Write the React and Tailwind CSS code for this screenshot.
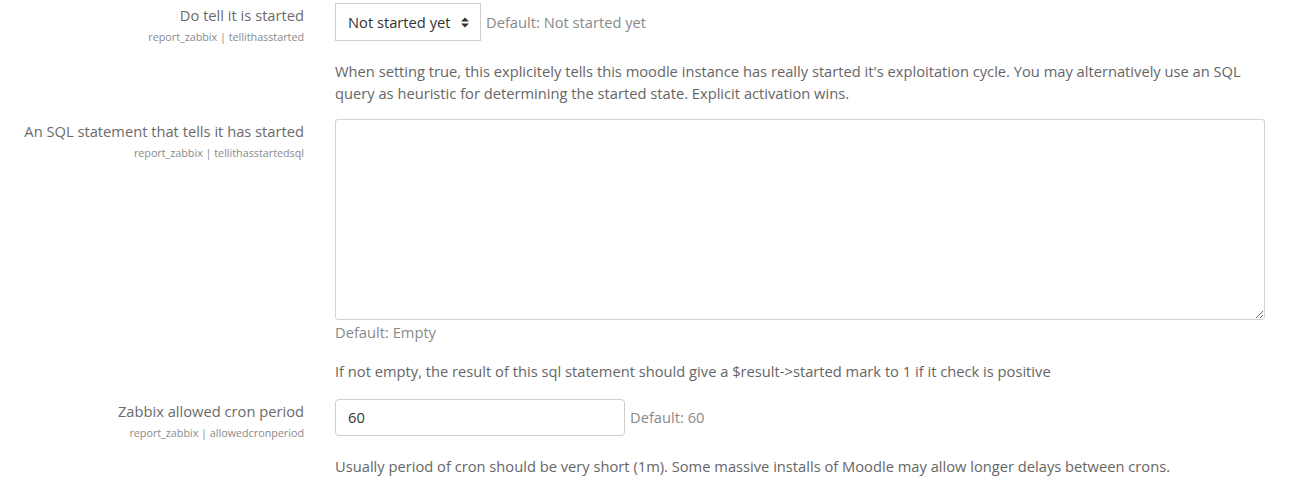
import React from "react";

// Label column on the left, control + description on the right
function Setting({ label, shortname, children }) {
    return (
        <div className="flex">
            <div className="w-[304px] shrink-0 text-right pt-px">
                <div className="text-[14.7px] leading-[22px] text-[#6b6b6b]">
                    {label}
                </div>
                <div className="mt-[3px] text-[10.75px] leading-[16px] text-[#8a8a8a]">
                    {shortname}
                </div>
            </div>
            <div className="ml-[31px] flex-1 pr-[28px]">{children}</div>
        </div>
    );
}

function UpDown() {
    return (
        <svg width="8" height="11" viewBox="0 0 8 11" className="text-[#333]">
            <path d="M0 4.5 L4 0.5 L8 4.5 Z" fill="currentColor" />
            <path d="M0 6.5 L4 10.5 L8 6.5 Z" fill="currentColor" />
        </svg>
    );
}

export default function App() {
    return (
        <div
            className="bg-white w-[1293px] h-[483px] overflow-hidden pt-[3px] text-[14.7px] text-[#666]"
            style={{ fontFamily: '"Open Sans", "Noto Sans", sans-serif' }}
        >
            <Setting label="Do tell it is started" shortname="report_zabbix | tellithasstarted">
                <div className="flex items-center">
                    <div className="h-[38px] w-[146px] border border-[#cfcfcf] flex items-center justify-between pl-[12px] pr-[11px] text-[#333]">
                        <span>Not started yet</span>
                        <UpDown />
                    </div>
                    <span className="ml-[5px] text-[#8a8a8a]">Default: Not started yet</span>
                </div>
                <p className="mt-[19px] leading-[22px]">
                    When setting true, this explicitely tells this moodle instance has really started it's exploitation cycle. You may alternatively use an SQL query as heuristic for determining the started state. Explicit activation wins.
                </p>
            </Setting>

            <div className="mt-[15px]">
                <Setting label="An SQL statement that tells it has started" shortname="report_zabbix | tellithasstartedsql">
                    <textarea
                        className="block w-full h-[201px] border border-[#d4d4d4] rounded-[3px] outline-none"
                        readOnly
                    />
                    <div className="mt-px leading-[22px] text-[#8a8a8a]">Default: Empty</div>
                    <p className="mt-[17px] leading-[22px]">
                        If not empty, the result of this sql statement should give a $result-&gt;started mark to 1 if it check is positive
                    </p>
                </Setting>
            </div>

            <div className="mt-[17px]">
                <Setting label="Zabbix allowed cron period" shortname="report_zabbix | allowedcronperiod">
                    <div className="flex items-center">
                        <div className="h-[37px] w-[290px] border border-[#cfcfcf] rounded-[4px] flex items-center pl-[12px] text-[#333]">
                            60
                        </div>
                        <span className="ml-[5px] text-[#8a8a8a]">Default: 60</span>
                    </div>
                    <p className="mt-[19px] leading-[22px]">
                        Usually period of cron should be very short (1m). Some massive installs of Moodle may allow longer delays between crons.
                    </p>
                </Setting>
            </div>
        </div>
    );
}
